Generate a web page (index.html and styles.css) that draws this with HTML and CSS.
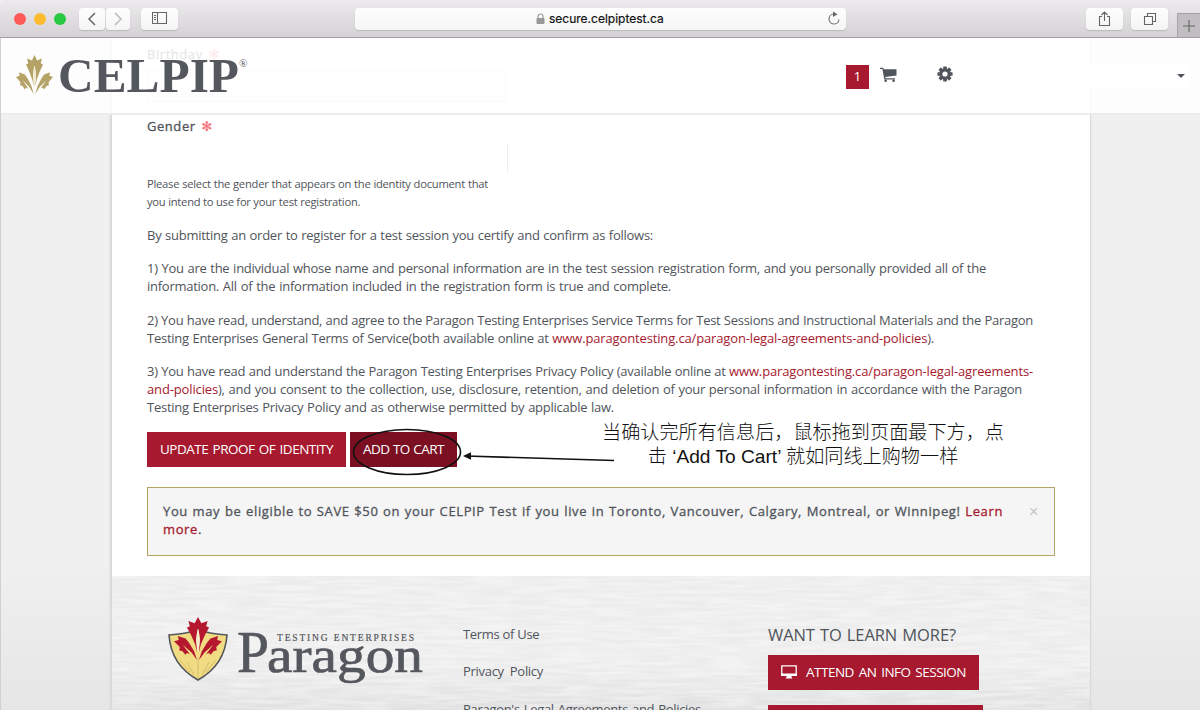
FILE: index.html
```html
<!DOCTYPE html>
<html lang="en">
<head>
<meta charset="utf-8">
<title>secure.celpiptest.ca</title>
<link rel="stylesheet" href="styles.css">
</head>
<body>
<svg class="defs" width="0" height="0">
  <defs>
    <symbol id="leaf" viewBox="0 0 100 100" preserveAspectRatio="none">
      <path d="M50 0L57 14L70 9L67 21L73 24L64 42L56 62L52 80L54 50L51 28L49 28L46 50L48 80L44 62L36 42L27 24L33 21L30 9L43 14Z"/>
      <path d="M49 28L51 28L54 52L51 78L49 78L46 52Z" class="vein"/>
      <path d="M0 55L10 52L8 43L24 49L31 58L42 78L48 98L36 80L18 63L33 84L27 82L24 86L17 77L11 76L12 68Z"/>
      <path d="M100 55L90 52L92 43L76 49L69 58L58 78L52 98L64 80L82 63L67 84L73 82L76 86L83 77L89 76L88 68Z"/>
    </symbol>
  </defs>
</svg>
<div class="toolbar">
  <i class="dot red"></i><i class="dot amber"></i><i class="dot green"></i>
  <div class="tb back"><svg width="10" height="14"><path d="M8 1L2 7L8 13"/></svg></div>
  <div class="tb fwd"><svg width="10" height="14"><path d="M2 1L8 7L2 13"/></svg></div>
  <div class="tb side"><svg width="16" height="13"><path d="M.5 .5H14.500V11.500H.5ZM5.500 .5V11.500M2 3.500H4M2 5.500H4M2 7.500H4"/></svg></div>
  <div class="url">
    <svg width="9" height="12"><path class="shackle" d="M2 6V3.500a2.500 2.500 0 0 1 5 0V6"/><rect x=".5" y="5" width="8" height="6" rx=".7"/></svg>
    <span>secure.celpiptest.ca</span>
    <svg class="reload" width="14" height="14"><path d="M7 2A5 5 0 1 0 12 7.500"/><path class="tip" d="M6 -.5L10.500 2.200L6 5Z"/></svg>
  </div>
  <div class="tb share"><svg width="13" height="16"><path d="M4 5.500H1.500V14.500H11.500V5.500H9M6.500 10V1M3.500 4L6.500 1L9.500 4"/></svg></div>
  <div class="tb tabs"><svg width="14" height="14"><path d="M1.500 4.500H9.500V12.500H1.500ZM4.500 4V1.500H12.500V9.500H10"/></svg></div>
  <div class="plus"><svg width="12" height="12"><path d="M6 0V12M0 6H12"/></svg></div>
</div>
<div class="viewport">
  <header class="site-header">
    <svg class="brand-leaf"><use href="#leaf"/></svg>
    <svg class="brand-name" width="195" height="50"><text x="0" y="36.500" textLength="181" lengthAdjust="spacingAndGlyphs">CELPIP</text><text class="reg" x="181" y="12">®</text></svg>
    <span class="count">1</span>
    <svg class="cart" width="17" height="16"><path d="M0 .8H3.200L3.800 2.300H16.500V8.600L5.200 10L5.500 11.200H15V12.400H4.300L2.400 2H0Z"/><circle cx="5.700" cy="13.700" r="1.300"/><circle cx="13.600" cy="13.700" r="1.300"/></svg>
    <svg class="gear" viewBox="-8 -8 16 16"><g><rect x="-1.800" y="-7.600" width="3.600" height="15.200" rx=".6"/><rect x="-1.800" y="-7.600" width="3.600" height="15.200" rx=".6" transform="rotate(45)"/><rect x="-1.800" y="-7.600" width="3.600" height="15.200" rx=".6" transform="rotate(90)"/><rect x="-1.800" y="-7.600" width="3.600" height="15.200" rx=".6" transform="rotate(135)"/><circle r="5.800"/></g><circle class="hole" r="2.600"/></svg>
    <span class="account"><i class="caret"></i></span>
  </header>
  <main class="sheet">
    <section class="form">
      <div class="label">Birthday <b class="ast">✻</b></div>
      <div class="field"></div>
      <div class="label gender">Gender <b class="ast">✻</b></div>
      <div class="select"></div>
      <p class="help"><span class="w341">Please select the gender that appears on the identity document that</span><span class="w213">you intend to use for your test registration.</span></p>
      <p><span class="w506">By submitting an order to register for a test session you certify and confirm as follows:</span></p>
      <p><span class="w839">1) You are the individual whose name and personal information are in the test session registration form, and you personally provided all of the</span><span class="w524">information. All of the information included in the registration form is true and complete.</span></p>
      <p><span class="w886">2) You have read, understand, and agree to the Paragon Testing Enterprises Service Terms for Test Sessions and Instructional Materials and the Paragon</span><span class="w787">Testing Enterprises General Terms of Service(both available online at <a>www.paragontesting.ca/paragon-legal-agreements-and-policies</a>).</span></p>
      <p><span class="w886">3) You have read and understand the Paragon Testing Enterprises Privacy Policy (available online at <a>www.paragontesting.ca/paragon-legal-agreements-</a></span><span class="w875"><a>and-policies</a>), and you consent to the collection, use, disclosure, retention, and deletion of your personal information in accordance with the Paragon</span><span class="w467">Testing Enterprises Privacy Policy and as otherwise permitted by applicable law.</span></p>
      <div class="actions">
        <div class="btn update"><span>UPDATE PROOF OF IDENTITY</span></div>
        <div class="btn add"><span>ADD TO CART</span></div>
        <svg class="pointer" width="270" height="50"><ellipse cx="57" cy="25" rx="53.500" ry="22.500"/><path d="M116 29L264 33.500"/><path class="tip" d="M113 29L121 25.200V32.800Z"/></svg>
        <div class="note" lang="zh-CN"><div>当确认完所有信息后，鼠标拖到页面最下方，点</div><div>击 ‘Add To Cart’ 就如同线上购物一样</div></div>
      </div>
      <div class="alert"><div><span class="w840">You may be eligible to SAVE $50 on your CELPIP Test if you live in Toronto, Vancouver, Calgary, Montreal, or Winnipeg! <a>Learn</a></span><span><a>more</a>.</span></div><em>×</em></div>
    </section>
    <footer class="foot">
      <svg class="paper" width="978" height="134"><filter id="grain" x="0" y="0" width="100%" height="100%"><feTurbulence type="fractalNoise" baseFrequency="0.025 0.28" numOctaves="2" seed="4"/><feColorMatrix values="0 0 0 0 1  0 0 0 0 1  0 0 0 0 1  2.500 0 0 0 -.8"/></filter><rect width="978" height="134" filter="url(#grain)"/></svg>
      <div class="paragon">
        <svg width="260" height="80">
          <path class="shield" d="M2 19Q18 18 31 14Q44 18 60 19Q58 49 31 64Q4 49 2 19Z"/>
          <path class="rays" d="M31 62V42M27 59L20 46M35 59L42 46M23 56L13 44M39 56L49 44"/>
          <svg class="red-leaf" x="7" y="1" width="48" height="44"><use href="#leaf"/></svg>
          <text class="pname" y="55.500"><tspan class="cap" x="70" textLength="32" lengthAdjust="spacingAndGlyphs">P</tspan><tspan x="100" textLength="156" lengthAdjust="spacingAndGlyphs">aragon</tspan></text>
          <text class="psub" x="110" y="25" textLength="137">TESTING ENTERPRISES</text>
        </svg>
      </div>
      <nav><a><span class="w75">Terms of Use</span></a><a><span class="w80">Privacy Policy</span></a><a><span class="w238">Paragon's Legal Agreements and Policies</span></a></nav>
      <div class="learn">
        <h2><span class="w188">WANT TO LEARN MORE?</span></h2>
        <div class="btn attend"><svg width="16" height="14"><path d="M.8 .8H15.200V9.800H.8Z"/><path class="solid" d="M0 8.500H16V11H10.500V12L11.500 13.500H4.500L5.500 12V11H0Z"/></svg><span>ATTEND AN INFO SESSION</span></div>
        <div class="btn next"></div>
      </div>
    </footer>
  </main>
</div>
</body>
</html>
```
FILE: styles.css
```css
* { box-sizing: border-box; }
body { margin: 0; width: 1200px; height: 710px; overflow: hidden; font-family: "Open Sans", sans-serif; color: #50545b; background: #f0f0f0; }
.defs { position: absolute; }
svg { display: block; flex: none; }
i { font-style: normal; }
a { color: #a6192e; }

.toolbar { height: 38px; display: flex; align-items: center; background: linear-gradient(#eceaec, #d4d2d4); border-bottom: 1px solid #a09ea0; padding-left: 14px; border-radius: 5px 0 0 0; }
.dot { flex: none; width: 12px; height: 12px; border-radius: 50%; margin-right: 8px; }
.red { background: #fc5b57; }
.amber { background: #fdbc2e; }
.green { background: #28c840; }
.tb { height: 22px; border-radius: 4px; background: linear-gradient(#fefefe, #f4f4f4); box-shadow: 0 1px 1px #bbb; display: flex; align-items: center; justify-content: center; flex: none; }
.tb svg, .plus svg { fill: none; stroke: #666; stroke-width: 1.100; }
.tb.back { width: 26px; margin-left: 5px; }
.back svg { stroke-width: 1.500; }
.fwd { width: 24px; margin-left: 1px; }
.tb.fwd svg { stroke: #bbb; stroke-width: 1.500; }
.side { width: 37px; margin-left: 11px; }
.url { width: 491px; height: 22px; margin-left: 177px; border-radius: 4px; background: linear-gradient(#fefefe, #f5f5f5); box-shadow: 0 1px 1px #bbb; display: flex; align-items: center; padding: 0 5px 0 181px; font: 12px Inter, sans-serif; color: #111; flex: none; -webkit-text-stroke: .2px #111; }
.url span { margin-left: 4px; letter-spacing: 0; }
.url svg { fill: #999; }
.url .shackle { fill: none; stroke: #999; stroke-width: 1.200; }
.url .reload { margin-left: auto; fill: none; stroke: #777; stroke-width: 1.200; overflow: visible; }
.reload .tip { fill: #666; stroke: none; }
.share { width: 37px; margin-left: 240px; }
.tabs { width: 37px; margin-left: 8px; }
.plus { width: 24px; height: 24px; margin: 13px 0 0 9px; background: #c0bec0; border: 1px solid #a5a3a5; border-bottom: 0; display: flex; align-items: center; justify-content: center; flex: none; }

.viewport { position: relative; height: 672px; overflow: hidden; background: linear-gradient(#f0f0f0 520px, #e6e6e6); border-left: 1px solid #d0d0d0; }
.site-header { position: absolute; z-index: 2; left: 0; right: 0; top: 0; height: 77px; background: rgba(255,255,255,.86); border-bottom: 2px solid #ececec; display: flex; align-items: flex-start; padding-left: 15px; }
.brand-leaf { width: 37px; height: 40px; margin-top: 17px; fill: #b5a267; }
.vein { fill: #f3ead0; }
.brand-name { margin: 17px 0 0 5px; font-family: "Liberation Serif", serif; font-size: 49px; font-weight: 700; fill: #54575d; }
.brand-name .reg { font-size: 11px; font-weight: 400; }
.count { width: 23px; height: 24px; margin: 27px 0 0 593px; background: #a6192e; color: #fff; font-size: 13px; line-height: 23px; text-align: center; }
.cart { margin: 29px 0 0 11px; fill: #50545b; }
.gear { width: 16px; height: 16px; margin: 28px 0 0 40px; fill: #50545b; }
.gear .hole { fill: #fff; }
.account { width: 101px; height: 24px; margin: 26px 0 0 135px; background: #fff; display: flex; justify-content: flex-end; align-items: center; padding-right: 4px; }
.caret { border: 4px solid transparent; border-top-color: #50545b; border-bottom: 0; }

.sheet { width: 981px; height: 672px; margin-left: 109px; background: #fff; border: solid #dadada; border-width: 0 1px 0 2px; box-shadow: 0 0 2px #ddd; }
.form { height: 538px; padding: 7px 35px 0; }
.label { height: 18px; line-height: 18px; font-size: 13px; letter-spacing: .55px; -webkit-text-stroke: .3px; }
.ast { color: #f7727c; font: 700 13px "DejaVu Sans", sans-serif; margin-left: 2px; }
.field { width: 360px; height: 33px; margin-top: 6px; background: #f4f4f4; border: 1px solid #e4e4e4; }
.gender { margin-top: 15px; }
.select { width: 361px; height: 28px; margin-top: 9px; border-right: 1px solid #eee; }
p { margin: 0 0 15.400px; font-size: 13px; line-height: 18px; letter-spacing: -.26px; }
p a { letter-spacing: -.14px; }
p span, .alert span, nav span, h2 span { display: block; white-space: nowrap; text-align-last: justify; }
.help { margin: 3px 0 15px; font-size: 11.200px; letter-spacing: -.24px; }
.w341 { width: 341px; } .w213 { width: 213px; } .w506 { width: 506px; } .w839 { width: 839px; } .w524 { width: 524px; }
.w886 { width: 886px; } .w787 { width: 787px; } .w875 { width: 875px; } .w467 { width: 467px; } .w840 { width: 840px; }
.w75 { width: 75px; } .w80 { width: 80px; } .w238 { width: 238px; } .w188 { width: 188px; }
.actions { position: relative; display: flex; gap: 4px; }
.btn { height: 35px; background: #a6192e; color: #fff; font-size: 13.500px; letter-spacing: -.5px; line-height: 34px; white-space: nowrap; display: flex; }
.btn span { flex: 1; text-align-last: justify; }
.update { width: 199px; padding: 0 13px; }
.add { width: 107px; padding: 0 13px; background: #7b1022; }
.pointer { position: absolute; left: 203px; top: -5px; fill: none; stroke: #111; stroke-width: 1.600; }
.pointer .tip { fill: #111; stroke: none; }
.note { position: absolute; left: 446px; top: -11px; width: 420px; text-align: center; color: #111; font: 300 19.150px/24px "Liberation Sans", "Noto Sans CJK SC", sans-serif; white-space: nowrap; }
.alert { width: 908px; height: 69px; margin-top: 20px; background: #f5f5f5; border: 1px solid #b5a267; padding: 14px 15px; font-size: 13px; line-height: 18px; letter-spacing: .63px; display: flex; }
.alert div { -webkit-text-stroke: .3px; }
.alert span:last-child { text-align-last: left; }
.alert em { font: 16px/20px "Liberation Sans", sans-serif; color: #c4c4c4; margin-left: 26px; }

.foot { position: relative; height: 134px; background: linear-gradient(#ececec, #ececec 90px, #e0e0e0); display: flex; overflow: hidden; }
.paper { position: absolute; left: 0; top: 0; opacity: .4; }
.paragon, nav, .learn { position: relative; }
.paragon { margin: 40px 0 0 55px; width: 296px; }
.shield { fill: #f1db83; stroke: #54575d; stroke-width: 1.600; }
.rays { fill: none; stroke: #d3bd70; stroke-width: 1; }
.red-leaf { fill: #b5172f; }
.pname { font: 51px "Liberation Serif", serif; fill: #54575d; stroke: #54575d; stroke-width: .7px; }
.cap { font-size: 60px; }
.psub { font: 9.500px "Liberation Serif", serif; fill: #54575d; stroke: #54575d; stroke-width: .2px; }
nav { width: 305px; padding-top: 49px; font-size: 13px; line-height: 18px; letter-spacing: -.3px; }
nav a { display: block; color: #50545b; margin-bottom: 19.400px; }
h2 { margin: 48px 0 9px; font-size: 16.500px; line-height: 22px; font-weight: 400; letter-spacing: -.1px; }
.attend { width: 211px; padding: 0 13px; }
.attend svg { margin: 10px 9px 0 0; fill: none; stroke: #fff; stroke-width: 1.300; }
.attend .solid { fill: #fff; stroke: none; }
.next { width: 215px; margin-top: 15px; }
```
